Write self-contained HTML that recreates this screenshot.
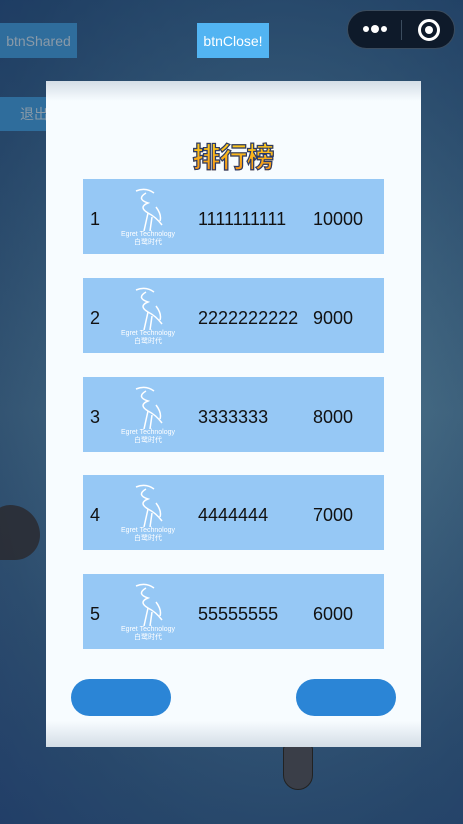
<!DOCTYPE html>
<html><head><meta charset="utf-8"><style>
*{margin:0;padding:0;box-sizing:border-box}
body{width:463px;height:824px;overflow:hidden;position:relative;font-family:"Liberation Sans","Noto Sans CJK SC",sans-serif;
background:radial-gradient(ellipse at 60% 40%,#587d96 0%,#3f6580 40%,#2c4d6e 75%,#24406a 100%);}
.bg2{position:absolute;inset:0;background:linear-gradient(180deg,rgba(20,50,90,.5) 0%,rgba(80,110,130,.15) 50%,rgba(30,60,100,.4) 100%)}
.btn{position:absolute;color:#fff;font-size:14px;display:flex;align-items:center;justify-content:center}
.panel{position:absolute;left:46px;top:81px;width:375px;height:666px;
background:linear-gradient(180deg,#d4dde6 0,#f7fcff 20px,#f7fcff 640px,#d4dde6 666px)}
.row{position:absolute;left:83px;width:301px;height:75px;background:#96c8f5;font-size:18px;color:#111}
.row span{position:absolute;top:30px}
.logo{position:absolute;left:28px;top:8px;width:74px;height:62px;color:#fff;text-align:center}
.logo svg{display:block;margin:0 auto}
.logo .t1{font-size:7px;line-height:8px;white-space:nowrap}
.logo .t2{font-size:7px;line-height:7px}
.pill{position:absolute;top:679px;width:100px;height:37px;border-radius:19px;background:#2b85d6}
.title{position:absolute;left:186px;top:140px;width:94px;text-align:center;font-size:28px;font-weight:bold;line-height:36px;letter-spacing:-1px;
background:linear-gradient(180deg,#ffd21a,#f58a1a);-webkit-background-clip:text;color:transparent;-webkit-text-stroke:1.2px #2a3a6a}
</style></head><body>
<div class="bg2"></div>
<div style="position:absolute;left:-10px;top:505px;width:50px;height:55px;border-radius:20px 30px 25px 10px;background:#2a2a30;opacity:.85"></div>
<div style="position:absolute;left:283px;top:745px;width:30px;height:45px;border-radius:4px 4px 15px 15px;background:#3a3e48;border:1px solid #222"></div>
<div class="btn" style="left:0;top:23px;width:77px;height:35px;background:#2f6d9c;color:#8a9aa8">btnShared</div>
<div class="btn" style="left:197px;top:23px;width:72px;height:35px;background:#52b4f2">btnClose!</div>
<div class="btn" style="left:0;top:97px;width:60px;height:34px;background:#2f6d9c;color:#8a9aa8;padding-left:20px;justify-content:flex-start">退出</div>
<div style="position:absolute;left:347px;top:10px;width:108px;height:39px;border-radius:20px;background:#0e1a2a;border:1px solid #3b4c5e">
 <div style="position:absolute;left:15px;top:15px;width:6px;height:6px;border-radius:3px;background:#fff"></div>
 <div style="position:absolute;left:23px;top:14px;width:8px;height:8px;border-radius:4px;background:#fff"></div>
 <div style="position:absolute;left:33px;top:15px;width:6px;height:6px;border-radius:3px;background:#fff"></div>
 <div style="position:absolute;left:53px;top:9px;width:1px;height:20px;background:#3b4c5e"></div>
 <div style="position:absolute;left:70px;top:8px;width:22px;height:22px;border-radius:11px;border:3px solid #fff"></div>
 <div style="position:absolute;left:77px;top:15px;width:8px;height:8px;border-radius:4px;background:#fff"></div>
</div>
<div class="panel"></div>
<div class="title">排行榜</div>
<div class="row" style="top:179px"><span style="left:7px">1</span><div class="logo"><svg width="44" height="44" viewBox="0 0 44 44"><path d="M10 4Q20 0 28 6M20 6Q10 12 22 16Q12 20 22 26Q30 30 36 38M22 26L18 44M26 30L24 44M30 20Q36 28 34 34" stroke="#fff" fill="none" stroke-width="1.5"/></svg><div class="t1">Egret Technology</div><div class="t2">白鹭时代</div></div><span style="left:115px">1111111111</span><span style="left:230px">10000</span></div>
<div class="row" style="top:278px"><span style="left:7px">2</span><div class="logo"><svg width="44" height="44" viewBox="0 0 44 44"><path d="M10 4Q20 0 28 6M20 6Q10 12 22 16Q12 20 22 26Q30 30 36 38M22 26L18 44M26 30L24 44M30 20Q36 28 34 34" stroke="#fff" fill="none" stroke-width="1.5"/></svg><div class="t1">Egret Technology</div><div class="t2">白鹭时代</div></div><span style="left:115px">2222222222</span><span style="left:230px">9000</span></div>
<div class="row" style="top:377px"><span style="left:7px">3</span><div class="logo"><svg width="44" height="44" viewBox="0 0 44 44"><path d="M10 4Q20 0 28 6M20 6Q10 12 22 16Q12 20 22 26Q30 30 36 38M22 26L18 44M26 30L24 44M30 20Q36 28 34 34" stroke="#fff" fill="none" stroke-width="1.5"/></svg><div class="t1">Egret Technology</div><div class="t2">白鹭时代</div></div><span style="left:115px">3333333</span><span style="left:230px">8000</span></div>
<div class="row" style="top:475px"><span style="left:7px">4</span><div class="logo"><svg width="44" height="44" viewBox="0 0 44 44"><path d="M10 4Q20 0 28 6M20 6Q10 12 22 16Q12 20 22 26Q30 30 36 38M22 26L18 44M26 30L24 44M30 20Q36 28 34 34" stroke="#fff" fill="none" stroke-width="1.5"/></svg><div class="t1">Egret Technology</div><div class="t2">白鹭时代</div></div><span style="left:115px">4444444</span><span style="left:230px">7000</span></div>
<div class="row" style="top:574px"><span style="left:7px">5</span><div class="logo"><svg width="44" height="44" viewBox="0 0 44 44"><path d="M10 4Q20 0 28 6M20 6Q10 12 22 16Q12 20 22 26Q30 30 36 38M22 26L18 44M26 30L24 44M30 20Q36 28 34 34" stroke="#fff" fill="none" stroke-width="1.5"/></svg><div class="t1">Egret Technology</div><div class="t2">白鹭时代</div></div><span style="left:115px">55555555</span><span style="left:230px">6000</span></div>
<div class="pill" style="left:71px"></div>
<div class="pill" style="left:296px"></div>
</body></html>
